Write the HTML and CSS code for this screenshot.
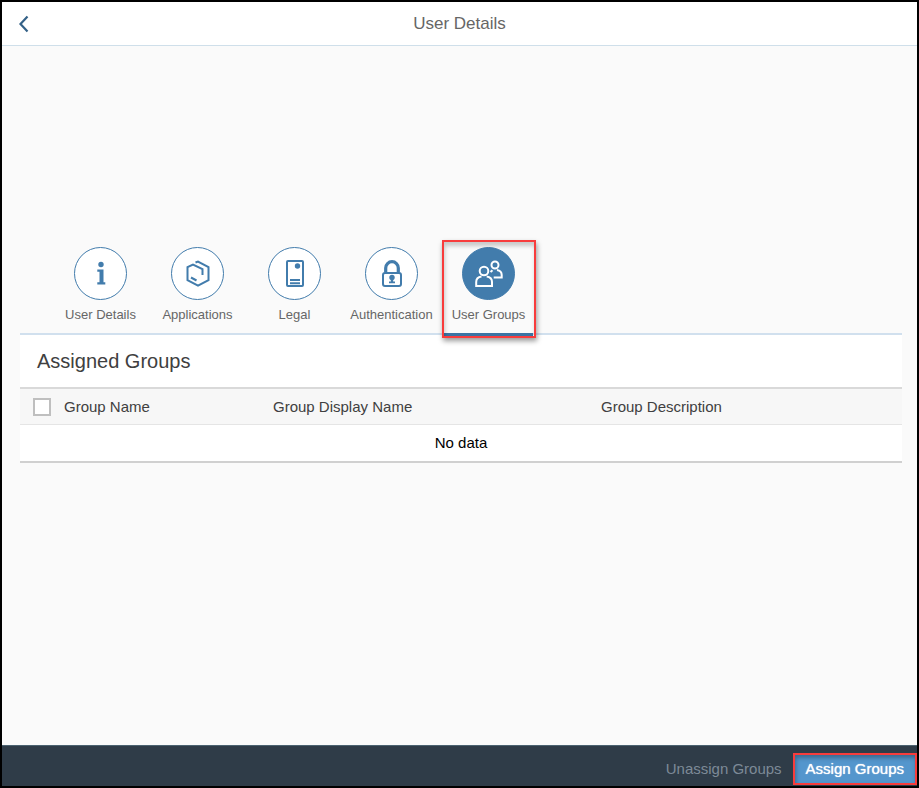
FILE: index.html
```html
<!DOCTYPE html>
<html lang="en">
<head>
<meta charset="utf-8">
<title>User Details</title>
<link rel="stylesheet" href="styles.css">
</head>
<body>
<div class="page">
  <header class="bar">
    <button class="back" type="button" aria-label="Back">
      <svg width="12" height="18" viewBox="0 0 12 18" fill="none" stroke="currentColor" stroke-width="2.200"><path d="M9.500 1.500 2.500 9l7 7.500"/></svg>
    </button>
    <h1 class="bar-title">User Details</h1>
  </header>

  <main class="content">
    <nav class="tabs" role="tablist">
      <button class="tab" type="button" role="tab">
        <span class="circle">
          <svg width="28" height="28" viewBox="0 0 28 28" fill="currentColor"><circle cx="14" cy="4.500" r="2.700"/><path d="M10.300 9.500h6.200v12.700h1.800V24.500h-8v-2.300h2.200V11.800h-2.200z"/></svg>
        </span>
        <span class="tab-label">User Details</span>
      </button>
      <button class="tab" type="button" role="tab">
        <span class="circle">
          <svg width="28" height="28" viewBox="0 0 28 28" fill="none" stroke="currentColor" stroke-width="2"><path d="M11.500 2.500 14 1.500l10.500 5.700v13L14 25.700 3.500 20.200V7.200L9 4.500l9.500 4.700v5.800"/><path d="M7 17.500l5.500 3"/></svg>
        </span>
        <span class="tab-label">Applications</span>
      </button>
      <button class="tab" type="button" role="tab">
        <span class="circle">
          <svg width="28" height="28" viewBox="0 0 28 28" fill="none" stroke="currentColor" stroke-width="2"><rect x="6" y="1" width="16" height="25" rx="1"/><circle cx="16.500" cy="6" r="2.700" fill="currentColor" stroke="none"/><path d="M9 20h10M9 23.200h10"/></svg>
        </span>
        <span class="tab-label">Legal</span>
      </button>
      <button class="tab" type="button" role="tab">
        <span class="circle">
          <svg width="28" height="28" viewBox="0 0 28 28" fill="none" stroke="currentColor" stroke-width="2"><rect x="5" y="13" width="18" height="13" rx="2"/><path d="M7.700 12.500V8a6.300 6.300 0 0 1 12.600 0v4.500" stroke-width="3.200"/><g fill="currentColor" stroke="none"><circle cx="14" cy="17.500" r="2.700"/><path d="M12.800 19h2.400v2.500h1.800v1.700h-6v-1.700h1.800z"/></g></svg>
        </span>
        <span class="tab-label">Authentication</span>
      </button>
      <button class="tab selected" type="button" role="tab" aria-selected="true">
        <span class="circle">
          <svg width="28" height="28" viewBox="0 0 28 28" fill="none" stroke="currentColor" stroke-width="2"><circle cx="9" cy="11" r="4.300"/><path d="M6.500 16.500C3 17 1.200 19 1.200 22v4h15.800v-4c0-3-1.800-5-5.300-5.500"/><circle cx="20" cy="5" r="3.500"/><path d="M15.500 12 17.500 10.200M22 10c3 .5 4.700 2.200 4.700 5v2.500h-8"/></svg>
        </span>
        <span class="tab-label">User Groups</span>
      </button>
    </nav>

    <section class="panel">
      <h2 class="panel-title">Assigned Groups</h2>
      <table class="groups">
        <thead>
          <tr>
            <th class="col-check"><input class="check" type="checkbox" aria-label="Select all"></th>
            <th class="col-name">Group Name</th>
            <th class="col-display">Group Display Name</th>
            <th>Group Description</th>
          </tr>
        </thead>
        <tbody>
          <tr><td colspan="4">No data</td></tr>
        </tbody>
      </table>
    </section>
  </main>

  <footer class="footer">
    <button class="action" type="button" disabled>Unassign Groups</button>
    <button class="action primary" type="button">Assign Groups</button>
  </footer>
</div>
</body>
</html>
```
FILE: styles.css
```css
* {
  box-sizing: border-box;
}

body {
  margin: 0;
  font-family: "Liberation Sans", Arial, sans-serif;
  color: #404040;
}

button {
  font: inherit;
  border: 0;
  padding: 0;
  background: none;
}

.page {
  display: flex;
  flex-direction: column;
  min-height: 100vh;
  border: 2px solid #000;
  background: #fafafa;
}

.bar {
  display: grid;
  grid-template-columns: 44px 1fr 44px;
  align-items: center;
  height: 44px;
  background: #fff;
  border-bottom: 1px solid #cfdfea;
}

.back {
  display: flex;
  justify-content: center;
  color: #346187;
}

.bar-title {
  margin: 0;
  font-size: 17px;
  line-height: 24px;
  font-weight: 400;
  text-align: center;
  color: #666;
}

.content {
  flex: 1;
  padding: 194px 15px 0 18px;
}

.tabs {
  display: flex;
  gap: 8px;
  padding-left: 36px;
}

.tab {
  position: relative;
  display: flex;
  flex-direction: column;
  align-items: center;
  width: 89px;
  height: 93px;
  padding-top: 7px;
  color: #427cac;
}

.circle {
  display: flex;
  align-items: center;
  justify-content: center;
  width: 53px;
  height: 53px;
  border: 1px solid #427cac;
  border-radius: 50%;
  background: #fff;
}

.tab-label {
  margin-top: 7px;
  font-size: 13px;
  line-height: 16px;
  white-space: nowrap;
  color: #666;
}

.selected .circle {
  background: #427cac;
  color: #fff;
}

.selected::before {
  content: "";
  position: absolute;
  inset: auto 0 -3px;
  height: 3px;
  background: #3a73a3;
}

.selected::after,
.primary::after {
  content: "";
  position: absolute;
  border: 2px solid #f83c3c;
}

.selected::after {
  inset: 0 -3px -5px -2px;
  box-shadow: 1px 3px 5px rgba(0, 0, 0, 0.4), inset 1px 4px 4px rgba(0, 0, 0, 0.2);
}

.panel {
  background: #fff;
  border-top: 2px solid #d1e0ee;
}

.panel-title {
  margin: 0;
  padding: 0 17px;
  font-size: 20px;
  line-height: 52px;
  font-weight: 400;
}

.groups {
  width: 100%;
  border-collapse: separate;
  border-spacing: 0;
  table-layout: fixed;
  border-top: 2px solid #d9d9d9;
  border-bottom: 2px solid #d0d0d0;
  font-size: 15px;
  line-height: 20px;
}

.groups th {
  height: 36px;
  padding: 0;
  border-bottom: 1px solid #e5e5e5;
  background: #f7f7f7;
  font-weight: 400;
  text-align: left;
}

.groups td {
  height: 36px;
  padding: 0;
  text-align: center;
  color: #000;
}

.groups .col-check {
  width: 44px;
  padding-left: 13px;
}

.col-name {
  width: 209px;
}

.col-display {
  width: 328px;
}

.check {
  display: block;
  appearance: none;
  width: 18px;
  height: 18px;
  margin: 0;
  border: 2px solid #bfbfbf;
  background: #fff;
}

.footer {
  display: flex;
  justify-content: flex-end;
  align-items: center;
  gap: 11px;
  height: 41px;
  padding-top: 6px;
  border-top: 1px solid #4b6270;
  background: #2f3c48;
}

.action {
  position: relative;
  height: 32px;
  padding-bottom: 2px;
  font-size: 15px;
  color: #7d8a97;
}

.primary {
  padding: 0 13px 2px;
  background: #5496cd;
  color: #fff;
  text-shadow: 0 0 1px #fff;
}

.primary::after {
  inset: 0;
  box-shadow: inset 1px 3px 4px rgba(0, 0, 0, 0.3);
}
```
